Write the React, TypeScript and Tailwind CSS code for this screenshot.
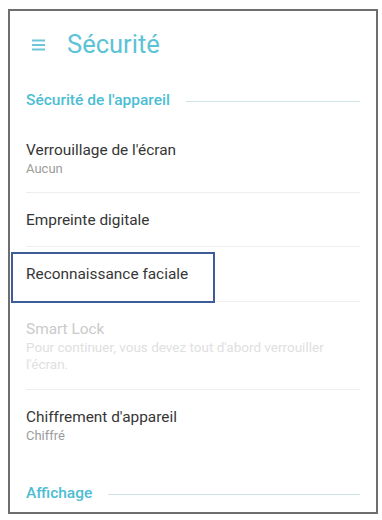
import React from 'react';

const Divider = () => <div className="mx-4 h-px shrink-0 bg-[#eeeeee]" />;

const SectionHeader = ({ label }: { label: string }) => (
  <div className="h-[46px] shrink-0 px-4 flex items-center gap-4">
    <span className="text-[15.5px] font-medium text-[#4dbdd3] whitespace-nowrap">{label}</span>
    <div className="flex-1 h-px bg-[#cfe3e7]" />
  </div>
);

const Item = ({
  title,
  sub,
  disabled,
  className,
}: {
  title: string;
  sub?: string;
  disabled?: boolean;
  className: string;
}) => (
  <div className={`shrink-0 px-4 flex flex-col justify-center ${className}`}>
    <div className={`text-[15.4px] leading-[20px] ${disabled ? 'text-[#cacaca]' : 'text-[#363636]'}`}>{title}</div>
    {sub && (
      <div
        className={`leading-[17px] ${disabled ? 'text-[13.5px] text-[#e0e0e0]' : 'text-[13px] text-[#9b9b9b]'}`}
      >
        {sub}
      </div>
    )}
  </div>
);

export default function App() {
  return (
    <div className="w-[382px] h-[520px] bg-white pl-[8px] pt-[9px]" style={{ fontFamily: 'Roboto, "Noto Sans", sans-serif' }}>
      <div className="w-[370px] h-[505px] border-2 border-[#6e6e6e] overflow-hidden flex flex-col">
        {/* header */}
        <div className="h-[67px] shrink-0 flex items-center pl-[22px]">
          <svg width="13" height="12" viewBox="0 0 13 12" className="shrink-0">
            <rect x="0" y="0.5" width="13" height="2" fill="#6cc7d8" />
            <rect x="0" y="5" width="13" height="2" fill="#6cc7d8" />
            <rect x="0" y="9.5" width="13" height="2" fill="#6cc7d8" />
          </svg>
          <span className="ml-[22px] text-[25.5px] text-[#5cc3d6]">Sécurité</span>
        </div>

        <SectionHeader label="Sécurité de l'appareil" />

        <Item title="Verrouillage de l'écran" sub="Aucun" className="h-[68px]" />
        <Divider />
        <Item title="Empreinte digitale" className="h-[53px]" />
        <Divider />
        <div className="relative shrink-0">
          <Item title="Reconnaissance faciale" className="h-[54px]" />
          <div className="absolute left-px top-[5px] w-[204px] h-[51px] border-2 border-[#3d5c98]" />
        </div>
        <Divider />
        <Item
          title="Smart Lock"
          sub="Pour continuer, vous devez tout d'abord verrouiller l'écran."
          disabled
          className="h-[87px] pr-10"
        />
        <Divider />
        <Item title="Chiffrement d'appareil" sub="Chiffré" className="h-[71px]" />
        <div className="h-[10px] shrink-0" />
        <SectionHeader label="Affichage" />
      </div>
    </div>
  );
}
